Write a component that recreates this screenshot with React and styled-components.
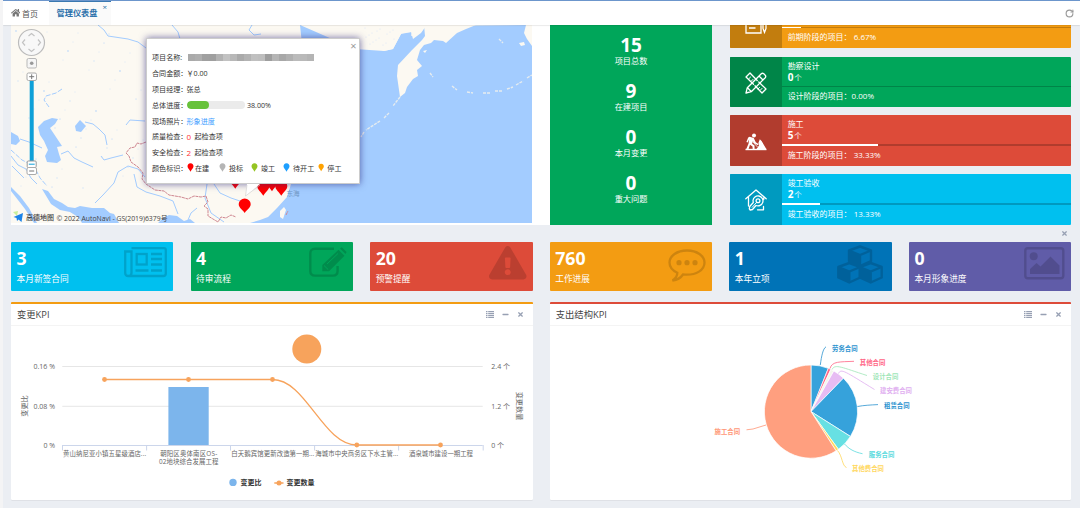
import React from "react";
import styled, { createGlobalStyle } from "styled-components";
import {
  FaExclamationTriangle,
  FaHome,
  FaMinus,
  FaTimes,
} from "react-icons/fa";
import { RotateCw } from "lucide-react";

const GlobalStyle = createGlobalStyle`
  * {
    box-sizing: border-box;
  }

  body {
    margin: 0;
    background: #ebeef3;
    font-family: "Open Sans", "Noto Sans CJK SC", sans-serif;
    color: #333;
    overflow: hidden;
  }

  svg {
    display: block;
  }
`;

const totals = [
  { value: 15, label: "项目总数" },
  { value: 9, label: "在建项目" },
  { value: 0, label: "本月变更" },
  { value: 0, label: "重大问题" },
];

const legend = [
  { color: "#ff0000", label: "在建", width: 32 },
  { color: "#b5b5b5", label: "投标", width: 32 },
  { color: "#95c423", label: "竣工", width: 32 },
  { color: "#1e9fff", label: "待开工", width: 35 },
  { color: "#ffa200", label: "停工", width: 24 },
];

const slices = [
  { from: 0, to: 21.8, color: "#36a2db" },
  { from: 21.8, to: 25.2, color: "#ff6384" },
  { from: 25.2, to: 29.3, color: "#f3f7ec" },
  { from: 29.3, to: 44.1, color: "#e7bcf3" },
  { from: 44.1, to: 122.2, color: "#36a2db" },
  { from: 122.2, to: 144, color: "#67e0e3" },
  { from: 144, to: 147.4, color: "#ffdb5c" },
  { from: 147.4, to: 360, color: "#ff9f7f" },
];

const pieLabels = [
  { x: 832, y: 350.7, text: "劳务合同", color: "#2c93cf", line: "M820.3 365 C821.5 356 823 348.5 826 346.8" },
  { x: 859.8, y: 364.8, text: "其他合同", color: "#ff6384", line: "M830 368.5 C832 361 840 362 854 361.3" },
  { x: 872.8, y: 378.8, text: "设计合同", color: "#9fe6b8", line: "M832 369.5 C835 363.5 842 367.5 867 375.5" },
  { x: 880, y: 392.8, text: "建安费合同", color: "#e0aef0", line: "M838.5 373.5 C841 368 845 371.5 874.5 389.5" },
  { x: 884, y: 408.4, text: "租赁合同", color: "#2c93cf", line: "M857.5 406.5 C864 405.3 870 405 878 404.6" },
  { x: 868.8, y: 456.8, text: "服务合同", color: "#5bdadd", line: "M844.5 444 C849 449 854 452 862.5 453.7" },
  { x: 852, y: 470.8, text: "其他费合同", color: "#ffd75c", line: "M837.5 450.5 C842.5 456 842 466 846.5 467.5" },
  { x: 714.6, y: 433.6, text: "施工合同", color: "#ff9676", line: "M766 425 L753 429 L746.5 429.8" },
];

const categories = [
  { x: 104.6, lines: ["黄山纳尼亚小镇五星级酒店..."], width: 83 },
  { x: 188.7, lines: ["朝阳区奥体南区OS-", "02地块综合发展工程"] },
  { x: 272.8, lines: ["白天鹅宾馆更新改造第一期..."], width: 83 },
  { x: 356.8, lines: ["海城市中央商务区下水主管..."], width: 83 },
  { x: 441, lines: ["酒泉城市建设一期工程"], width: 64 },
];

const CENTER = { x: 811, y: 411.6, r: 46.6 };

const slicePath = ({ from, to }) => {
  const point = (deg) => {
    const a = ((deg - 90) * Math.PI) / 180;
    return `${CENTER.x + CENTER.r * Math.cos(a)} ${CENTER.y + CENTER.r * Math.sin(a)}`;
  };
  return `M${CENTER.x} ${CENTER.y} L${point(from)} A${CENTER.r} ${CENTER.r} 0 ${
    to - from > 180 ? 1 : 0
  } 1 ${point(to)} Z`;
};

const Pin = ({ color }) => (
  <svg width="7" height="9" viewBox="0 0 14 18">
    <path d="M7 0.500 C11 0.500 13 3.500 13 6.500 C13 10.500 9.500 12.500 7 17.500 C4.500 12.500 1 10.500 1 6.500 C1 3.500 3 0.500 7 0.500 Z" fill={color} />
  </svg>
);

const MapDrawing = () => (
  <svg width="521" height="198" viewBox="11 25 521 198">
    <rect x="11" y="25" width="521" height="198" fill="#fcf9f2" />
    <g fill="#a3ccff">
      <path d="M300 25 L355 49 L384 51 L393 49 L401 34 L411 32 L413 39 L421 33 L426 26 L532 25 V223 H250 L260 220 L268 217 L277 208 L287 197 L291 184 L285 170 L310 120 Z" />
      <path d="M38 127 L44 121 L52 118 L58 119 L55 124 L50 128 L54 134 L60 143 L62 146 L57 147 L59 154 L61 160 L57 163 L47 162 L45 156 L48 150 L44 141 L40 135 Z" />
      <path d="M75 126 L80 120 L86 126 L81 132 L76 131 Z" />
      <path d="M11 132 L18 136 L20 141 L16 145 L11 144 Z" />
      <path d="M42 189 L48 191 L54 199 L62 203 L68 207 L75 208 L80 206 L92 208 L104 208 L110 213 L114 214 L119 223 H82 L78 217 L70 212 L60 210 L51 204 Z" />
      <path d="M158 223 L163 218 L169 215 L177 216 L184 221 L190 219 L195 223 Z" />
      <path d="M11 187 L20 196 L29 208 L37 223 L34 223 L25 209 L11 191 Z" />
    </g>
    <path
      d="M360 25 H426 L421 32 L411 36 L412 32 L401.500 33 L393 49 L384 51 L378 48 L360 48.500 Z"
      fill="#fcf9f2"
    />
    <path
      d="M424 25 L425 36 L422 40 L412 50 L398 65 L397 76 L400 97 L405 93 L407 87 L413 79 L418 76 L417 70 L422 66 L417 60 L420 50 L424 45 L431 43 L434 40 L443 41 L446 43 L457 33 L466 29 L476 25 Z"
      fill="#fcf9f2"
    />
    <path d="M526 25 L524 33 L527 39 L532 46 V25 Z M519 43 L524 42 L525 45 L521 46 Z M423 51 L427 50 L425 53 Z M280 211 L284 207 L286 210 L283 219 L280 217 Z" fill="#fcf9f2" />
    <path
      d="M400 97 L393 106 M389 113 L384 118 M380 121 L366 130 M364 132 L361 137 M430 73 L433 77 M452 86 L457 90 M467 92 L473 93 M483 93 L490 93 M495 91 L502 91 M507 89 L513 87 M516 85 L523 81 M527 78 L532 75 M499 39 L503 43"
      stroke="#e6ecef"
      strokeWidth="1.4"
      strokeDasharray="3 1"
      fill="none"
    />
    <g fill="none" stroke="#a3ccff" strokeWidth="1">
      <path d="M98 25 L104 30 L108 36 L128 39 L138 42 L146 48" />
      <path d="M172 25 L178 32 L180 39 M252 25 L249 30 L254 35 L261 34" />
      <path d="M85 122 L93 124 L99 129 L105 135 L107 145 M126 125 L130 120 L145 121" />
      <path d="M61 154 L68 151 L74 158 L82 162 L93 167 M42 148 L29 142 L20 139" />
      <path d="M62 89 L56 93 L46 96 L44 100 L49 107 M11 150 L22 160 L34 166 L40 178 L47 186" strokeDasharray="5 1.5" />
      <path d="M11 156 L18 165 L26 169 L31 178 L37 184 M12 166 L24 178" />
      <path d="M95 203 L103 195 L114 183 L118 172 L128 166 L138 169 L145 177" />
      <path d="M134 174 L137 187 L146 192 L160 196 L173 201 L178 214" />
      <path d="M123 155 L111 158 L104 160 L101 156" />
      <path d="M207 184 L205 198 L211 213 L224 222 M214 184 L220 193 L231 198 L243 202" />
      <path d="M197 208 L191 213 L188 220" />
    </g>
    <g fill="#b9d6fb">
      {Array.from({ length: 54 }, (_, i) => (
        <ellipse
          key={i}
          cx={16 + ((i * 47) % 128)}
          cy={31 + ((i * 29) % 164)}
          rx={i % 4 ? 0.45 : 0.9}
          ry={i % 3 ? 0.4 : 0.7}
        />
      ))}
      {Array.from({ length: 16 }, (_, i) => (
        <circle key={i} cx={365 + ((i * 7) % 31)} cy={28 + ((i * 5) % 18)} r="0.4" />
      ))}
    </g>
    <path
      d="M146 142 L141 144 L137 143 L135 147 L130 148 L126 153 L129 156 L131 162 L138 167 L143 173 L142 179 L146 184 L155 190 L164 191 L169 195 L175 196 L181 197 L188 199 L194 196 L201 197 L206 196 L208 202 L204 206 L208 209 L208 216 L213 219 L218 222 L221 217 L226 218 L231 215 L236 217 M286 215 L288 211"
      fill="none"
      stroke="#cf8791"
      strokeWidth="1"
      strokeDasharray="3 .6"
    />
    <text x="286.500" y="195.500" fontSize="6.6" fill="#7198c5">东海</text>
    <g fill="#ff0000">
      {[
        [235.300, 175],
        [263.300, 182],
        [272, 177.500],
        [281.300, 182],
      ].map(([x, y]) => (
        <path key={x} d={`M${x} ${y - 2}a6 6 0 0 1 6 6c0 4-4 6-6 9.700-2-3.700-6-5.700-6-9.700a6 6 0 0 1 6-6z`} />
      ))}
      <path d="M244.700 198.500a6 5.600 0 0 1 6 5.600c0 4-4 5.400-6 9-2-3.600-6-5-6-9a6 5.600 0 0 1 6-5.600z" />
    </g>
    <path d="M13 212 L18 211 L17 216 Z" fill="#c9ef9a" />
    <path d="M13.500 217 L23 213 L21.500 222 L18.500 219.500 L17 221 L16.500 218 Z" fill="#1b83e8" />
    <text x="26" y="219.700" fontSize="7" fontWeight="500" fill="#444" textLength="28">高德地图</text>
    <text x="56.500" y="221" fontSize="6.8" fill="#444" textLength="111" lengthAdjust="spacingAndGlyphs">© 2022 AutoNavi - GS(2019)6379号</text>
  </svg>
);

const ZoomControl = () => (
  <svg width="30" height="150" viewBox="0 0 30 150">
    <circle cx="14.500" cy="14.500" r="13" fill="#f8f8f8" stroke="#bcbcbc" strokeWidth="1.200" />
    <path d="M11.500 8 L14.500 5.500 L17.500 8 M11.500 21 L14.500 23.500 L17.500 21 M8 11.500 L5.500 14.500 L8 17.500 M21 11.500 L23.500 14.500 L21 17.500" fill="none" stroke="#c3c3c3" strokeWidth="1.200" />
    <rect x="10" y="30.500" width="9.500" height="9.500" rx="1.500" fill="#f6f6f6" stroke="#b8b8b8" />
    <circle cx="14.700" cy="35.300" r="1.800" fill="#999" />
    <rect x="12.700" y="51" width="4" height="86" fill="#0fa0d8" />
    <rect x="10" y="45" width="9.500" height="7.500" rx="1.500" fill="#fff" stroke="#aaa" />
    <path d="M12.200 48.700 H17.200 M14.700 46.300 V51.100" stroke="#777" />
    <rect x="10.200" y="133" width="9" height="6.500" rx="1" fill="#fff" stroke="#999" />
    <path d="M11.800 136.200 H17.700" stroke="#0fa0d8" />
    <rect x="10" y="139.500" width="9.500" height="7" rx="1.500" fill="#fff" stroke="#aaa" />
    <path d="M12.200 143 H17.200" stroke="#777" />
  </svg>
);

const CardPencilIcon = () => (
  <svg width="22" height="22" viewBox="0 0 22 22" fill="none" stroke="#fff" strokeWidth="1.300">
    <path d="M16 8 V20 H1 V2 H16 M4 11 H7 M4 15 H10.500" />
    <path d="M18 2 H21 V15.500 L19.500 19.500 L18 15.500 Z" />
  </svg>
);

const DesignIcon = () => (
  <svg width="22" height="22" viewBox="0 0 22 22" fill="none" stroke="#fff" strokeWidth="1.300" strokeLinejoin="round" strokeLinecap="round">
    <path d="M8.500 12.200 L1 5 L5 1 L12.200 8.500 M13.800 10 L21 17 L17 21 L10 13.800" />
    <path d="M3.800 6.800 L5.600 5 M6.200 9.200 L8 7.400 M13 17 L14.500 15.400 M15.500 18 L17 16.400" strokeWidth="1" />
    <path d="M1 21 L2.300 15.700 L16.300 1.700 Q17.500 .7 18.800 1.800 L20.200 3.200 Q21.300 4.500 20.200 5.700 L6.300 19.700 Z M2.500 15.800 L6.200 19.500 M14 4 L18 8" />
  </svg>
);

const DiggingIcon = () => (
  <svg width="22" height="18" viewBox="0 0 22 18" fill="#fff">
    <circle cx="9" cy="2.400" r="2" />
    <path d="M4.700 3.700 L8.700 5 L10.800 9.200 L13.500 11 L13 12.200 L9.600 10.500 L7.900 8.200 L7.100 10.700 L9.500 12.600 L9.600 16 H7.700 L7.500 13.600 L5 11.800 L3.600 16 H1.300 L3.500 10.800 L4.200 6.200 L2.700 9.500 L1.400 9 L3.200 4.400 Z" />
    <path d="M14.800 6.300 L16.600 8 L21.300 16 H11.500 L14 12.500 L13.400 10 Z" />
    <path d="M8 9 L12.500 14" stroke="#fff" strokeWidth=".8" />
    <rect x=".5" y="15.800" width="21" height="1.400" />
  </svg>
);

const HouseKeyIcon = () => (
  <svg width="22" height="22" viewBox="0 0 22 22" fill="none" stroke="#fff" strokeWidth="1.300" strokeLinejoin="round" strokeLinecap="round">
    <path d="M.8 9.800 L11 1 L21.200 9.800 M3.500 8.500 V17 M18.700 9 V10.500 M12.500 20.800 H18.500 V17.500" />
    <path d="M8 11.500 A5 5 0 1 1 11 16.500 L7.500 20.500 L5.200 21 L4.300 19.800 L4.700 17.500 L8.300 13.500 Z" />
    <circle cx="13" cy="11.800" r="1.900" />
    <path d="M11.500 13.500 L7.200 18.300" strokeWidth="1" />
  </svg>
);

const NewspaperIcon = () => (
  <svg width="43" height="31" viewBox="0 0 43 31" fill="none" stroke="currentColor" strokeWidth="2.300">
    <path d="M7.500 1.200 H40 Q41.800 1.200 41.800 3 V26.500 Q41.800 29 39.300 29 H4.300 Q1.200 29 1.200 26 V4.500 H7.500 V26 Q7.500 29 4.300 29" />
    <rect x="12.700" y="7" width="10" height="10.500" />
    <path d="M27 7 H38 M27 12 H38 M27 17.500 H38 M11.500 23.500 H24.500 M27 23.500 H38" />
  </svg>
);

const EditIcon = () => (
  <svg width="38" height="31" viewBox="0 0 38 31" fill="none" stroke="currentColor" strokeWidth="2.400">
    <path d="M25 1.800 H6 Q1.300 1.800 1.300 6.500 V24 Q1.300 28.600 6 28.600 H24 Q28.600 28.600 28.600 24 V19" />
    <path d="M13.300 18 L29.500 2.800 L35.500 8.800 L20 24.300 H13.300 Z M31 1.500 L32.800 .2 L37.600 5 L36.500 7 Z" fill="currentColor" stroke="none" />
    <path d="M15 18.500 L19.200 22.600 M18 17 L29 6.500" stroke="#00a65a" strokeWidth="1" />
  </svg>
);

const CommentIcon = () => (
  <svg width="38" height="34" viewBox="0 0 38 34">
    <path d="M19 1.500 C9 1.500 1.500 7 1.500 13.500 C1.500 17.800 4.500 21.500 9.300 23.700 C9.300 27 7.500 29.500 4.500 31.500 C9 31 13 28.500 15 25.500 C29 26.800 36.500 20.500 36.500 13.500 C36.500 7 29 1.500 19 1.500 Z" fill="none" stroke="currentColor" strokeWidth="2.300" />
    <circle cx="11" cy="13.700" r="2.600" fill="currentColor" />
    <circle cx="19" cy="13.700" r="2.600" fill="currentColor" />
    <circle cx="27" cy="13.700" r="2.600" fill="currentColor" />
  </svg>
);

const Cube = ({ x, y }) => (
  <g transform={`translate(${x} ${y})`}>
    <path d="M0 5 L11 1 L22 5 V15.500 L11 20.500 L0 15.500 Z" fill="none" stroke="currentColor" strokeWidth="2.400" strokeLinejoin="round" />
    <path d="M0 5 L11 9.500 V20.500 L0 15.500 Z" fill="currentColor" />
    <path d="M0 5 L11 9.500 L22 5 M11 9.500 V20.500" fill="none" stroke="currentColor" strokeWidth="2.400" />
  </g>
);

const CubesIcon = () => (
  <svg width="46" height="40" viewBox="0 0 46 40">
    <Cube x={12} y={0.5} />
    <Cube x={1.3} y={17} />
    <Cube x={22.7} y={17} />
  </svg>
);

const PictureIcon = () => (
  <svg width="41" height="33" viewBox="0 0 41 33">
    <rect x="1.300" y="1.300" width="38" height="30" rx="2.500" fill="none" stroke="currentColor" strokeWidth="2.400" />
    <circle cx="9.700" cy="9.300" r="4" fill="currentColor" />
    <path d="M6 27 V22 L12.500 16 L16.500 19.500 L26.500 9.500 L35.500 18.500 V27 Z" fill="currentColor" />
  </svg>
);

const ListIcon = () => (
  <svg width="8" height="7" viewBox="0 0 8 7" fill="currentColor">
    {[0, 1.9, 3.8, 5.7].map((y) => (
      <path key={y} d={`M0 ${y}h1.500v1.200H0z M2.200 ${y}H8v1.200H2.200z`} />
    ))}
  </svg>
);

// the first stage is scrolled half way under the header, only its lower part shows
const stages = [
  { color: "#f39c12", dark: "#c27d0e", icon: <CardPencilIcon />, text: "前期阶段的项目： 6.67%", percent: 6.67 },
  { color: "#00a65a", dark: "#008548", icon: <DesignIcon />, title: "勘察设计", count: 0, text: "设计阶段的项目：0.00%", percent: 0 },
  { color: "#dd4b39", dark: "#b13c2e", icon: <DiggingIcon />, title: "施工", count: 5, text: "施工阶段的项目： 33.33%", percent: 33.33 },
  { color: "#00c0ef", dark: "#009abf", icon: <HouseKeyIcon />, title: "竣工验收", count: 2, text: "竣工验收的项目： 13.33%", percent: 13.33 },
];

const cards = [
  { color: "#00c0ef", value: 3, label: "本月新签合同", icon: <NewspaperIcon />, top: 5, right: 6 },
  { color: "#00a65a", value: 4, label: "待审流程", icon: <EditIcon />, top: 5, right: 5.5 },
  { color: "#dd4b39", value: 20, label: "预警提醒", icon: <FaExclamationTriangle size={37.5} />, top: 1.5, right: 6 },
  { color: "#f39c12", value: 760, label: "工作进展", icon: <CommentIcon />, top: 7, right: 6 },
  { color: "#0073b7", value: 1, label: "本年立项", icon: <CubesIcon />, top: 2.5, right: 8.5 },
  { color: "#605ca8", value: 0, label: "本月形象进度", icon: <PictureIcon />, top: 5, right: 6 },
];

const KpiChart = () => (
  <svg width="521" height="174" viewBox="11 326 521 174" fontSize="7" fill="#666">
    <path d="M62.300 366.500 H482.700 M62.300 406.300 H482.700" stroke="#e6e6e6" />
    <path d="M62.300 445.500 H482.700 M62.500 445 V450.500 M146.600 445 V450.500 M230.500 445 V450.500 M314.600 445 V450.500 M398.600 445 V450.500 M483.200 445 V450.500" stroke="#ccd6eb" fill="none" />
    <rect x="168.400" y="387" width="40.300" height="58" fill="#7cb5ec" />
    <path d="M104.500 379.500 H272.500 C306 379.500 323 445 356.800 445 H440.500" fill="none" stroke="#f7a35c" strokeWidth="1.300" />
    {[[104.5, 379.5], [188.5, 379.5], [272.5, 379.5], [356.8, 445], [440.5, 445]].map(([x, y]) => (
      <circle key={x} cx={x} cy={y} r="2.400" fill="#f7a35c" />
    ))}
    <circle cx="306.800" cy="348.900" r="14.500" fill="#f7a35c" />
    <g textAnchor="end">
      <text x="55" y="369" textLength="21.500">0.16 %</text>
      <text x="55" y="408.700" textLength="21.500">0.08 %</text>
      <text x="55" y="447.600">0 %</text>
    </g>
    <text x="491.300" y="369">2.4 个</text>
    <text x="491.300" y="408.700">1.2 个</text>
    <text x="491.300" y="447.600">0 个</text>
    <text transform="translate(26.700 406) rotate(-90)" textAnchor="middle" fontSize="7.200">变更比</text>
    <text transform="translate(517 406) rotate(90)" textAnchor="middle" fontSize="7.200">变更数量</text>
    {categories.map((category) => (
      <g key={category.x} textAnchor="middle" fontSize="6.400">
        {category.lines.map((line, i) => (
          <text key={line} x={category.x} y={456.2 + i * 8.2} textLength={category.width || (i ? 59.5 : 57)}>
            {line}
          </text>
        ))}
      </g>
    ))}
    <g fill="#333" fontWeight="700">
      <circle cx="233" cy="482.400" r="3.700" fill="#7cb5ec" />
      <text x="240.600" y="485.200" textLength="21">变更比</text>
      <path d="M274.300 483 H283.500" stroke="#f7a35c" strokeWidth="1.300" />
      <circle cx="279" cy="483" r="2.500" fill="#f7a35c" />
      <text x="286.500" y="485.200" textLength="28">变更数量</text>
    </g>
  </svg>
);

const PieChart = () => (
  <svg width="521" height="174" viewBox="550 326 521 174" fontSize="6.400" fontWeight="700">
    {slices.map((slice) => (
      <path key={slice.from} d={slicePath(slice)} fill={slice.color} stroke="#fff" strokeWidth=".7" />
    ))}
    {pieLabels.map((label) => (
      <g key={label.text}>
        <path d={label.line} fill="none" stroke={label.color} strokeWidth=".8" />
        <text x={label.x} y={label.y} fill={label.color}>
          {label.text}
        </text>
      </g>
    ))}
  </svg>
);

const Panel = ({ color, title, children }) => (
  <PanelContainer $color={color}>
    <PanelHeader>
      <PanelTitle>{title}</PanelTitle>
      <PanelTools>
        <ListIcon />
        <FaMinus size={7} />
        <FaTimes size={7} />
      </PanelTools>
    </PanelHeader>
    {children}
  </PanelContainer>
);

const ProjectPopup = () => (
  <Popup>
    <PopupClose>×</PopupClose>
    <PopupRow>
      <PopupLabel>项目名称:</PopupLabel>
      <Mosaic>
        {["#aaa", "#aeaeae", "#a0a0a0", "#9f9f9f", "#b2b2b2", "#c2c2c2", "#b8b8b8", "#aaa", "#b3b3b3", "#c0c0c0", "#bebebe", "#9e9e9e", "#b5b5b5", "#a8a8a8", "#b0b0b0", "#bbb", "#b9b9b9", "#b4b4b4"].map((color, i) => (
          <MosaicCell key={i} $color={color} />
        ))}
      </Mosaic>
    </PopupRow>
    <PopupRow>
      <PopupLabel>合同金额：</PopupLabel>￥0.00
    </PopupRow>
    <PopupRow>
      <PopupLabel>项目经理：</PopupLabel>张总
    </PopupRow>
    <PopupRow>
      <PopupLabel>总体进度：</PopupLabel>
      <Track>
        <TrackFill />
      </Track>
      38.00%
    </PopupRow>
    <PopupRow>
      <PopupLabel>现场照片：</PopupLabel>
      <PopupLink>形象进度</PopupLink>
    </PopupRow>
    <PopupRow>
      <PopupLabel>质量检查：</PopupLabel>
      <Count>0</Count>起检查项
    </PopupRow>
    <PopupRow>
      <PopupLabel>安全检查：</PopupLabel>
      <Count>2</Count>起检查项
    </PopupRow>
    <PopupRow>
      <PopupLabel>颜色标识：</PopupLabel>
      {legend.map((item, i) => (
        <LegendItem key={item.label} $width={item.width} $gap={i ? 3.5 : 1.5}>
          <Pin color={item.color} />
          {item.label}
        </LegendItem>
      ))}
    </PopupRow>
    <PopupArrow width="16" height="13" viewBox="0 0 16 13">
      <path d="M2 0 L0.500 12 L15 0 Z" fill="#fff" />
      <path d="M2 1 L0.500 12 L15 1" fill="none" stroke="#ccc" strokeWidth=".6" />
    </PopupArrow>
  </Popup>
);

export default function App() {
  return (
    <Page>
      <GlobalStyle />
      <Header>
        <HomeTab>
          <FaHome size={9.5} />
          首页
        </HomeTab>
        <ActiveTab>
          管理仪表盘
          <TabClose>×</TabClose>
        </ActiveTab>
        <Refresh>
          <RotateCw size={9} strokeWidth={3} />
        </Refresh>
      </Header>
      <Content>
        <TopRow>
          <MapPanel>
            <MapArea>
              <MapDrawing />
              <ControlHolder>
                <ZoomControl />
              </ControlHolder>
              <ProjectPopup />
            </MapArea>
            <Totals>
              {totals.map((total) => (
                <Total key={total.label}>
                  <TotalValue>{total.value}</TotalValue>
                  <TotalLabel>{total.label}</TotalLabel>
                </Total>
              ))}
            </Totals>
          </MapPanel>
          <Stages>
            {stages.map((stage) => (
              <Stage key={stage.text} $color={stage.color}>
                <StageIcon $color={stage.dark}>{stage.icon}</StageIcon>
                <StageBody>
                  <StageTitle>{stage.title}</StageTitle>
                  <StageCount>
                    {stage.title && (
                      <>
                        <b>{stage.count}</b> 个
                      </>
                    )}
                  </StageCount>
                  <StageBar>
                    <StageBarFill style={{ width: `${stage.percent}%` }} />
                  </StageBar>
                  <StageText>{stage.text}</StageText>
                </StageBody>
              </Stage>
            ))}
          </Stages>
        </TopRow>
        <CloseRow>
          <FaTimes size={7} />
        </CloseRow>
        <Cards>
          {cards.map((card) => (
            <Card key={card.label} $color={card.color}>
              <div>
                <CardValue>{card.value}</CardValue>
                <CardLabel>{card.label}</CardLabel>
              </div>
              <CardIcon $top={card.top} $right={card.right}>
                {card.icon}
              </CardIcon>
            </Card>
          ))}
        </Cards>
        <Panels>
          <Panel color="#f39c12" title="变更KPI">
            <KpiChart />
          </Panel>
          <Panel color="#dd4b39" title="支出结构KPI">
            <PieChart />
          </Panel>
        </Panels>
      </Content>
    </Page>
  );
}

const Page = styled.div`
  display: flex;
  flex-direction: column;
  height: 508px;
  overflow: hidden;
  border-left: 3px solid #f4f4f5;
`;

const Header = styled.header`
  display: flex;
  flex: none;
  height: 25px;
  background: #fff;
  border-top: 1px solid #6c96cc;
  box-shadow: 0 0.5px 1.5px rgba(0, 0, 0, 0.2);
  position: relative;
  z-index: 1;
`;

const HomeTab = styled.div`
  display: flex;
  align-items: center;
  gap: 2px;
  width: 45.5px;
  padding-left: 7.5px;
  font-size: 8px;
  color: #555;

  svg {
    color: #777;
  }
`;

const ActiveTab = styled.div`
  position: relative;
  width: 62px;
  padding-left: 8px;
  line-height: 22px;
  border-top: 1.5px solid #3a78b0;
  background: #fafafa;
  font-size: 8.2px;
  font-weight: 600;
  color: #2a70aa;
`;

const TabClose = styled.span`
  position: absolute;
  top: -1px;
  right: 3.5px;
  font-size: 8px;
  font-weight: 400;
  line-height: 11px;
`;

const Refresh = styled.div`
  display: flex;
  align-items: center;
  margin-left: auto;
  padding-right: 6px;
  color: #999;
`;

const Content = styled.main`
  flex: 1;
  padding: 0 8.7px 0 8px;
`;

const TopRow = styled.div`
  display: flex;
  justify-content: space-between;
  height: 199.5px;
  overflow: hidden;
`;

const MapPanel = styled.section`
  display: flex;
  justify-content: space-between;
  width: 701.3px;
  background: #fff;
`;

const MapArea = styled.div`
  position: relative;
  width: 521px;
  height: 198px;
`;

const ControlHolder = styled.div`
  position: absolute;
  top: 3px;
  left: 6px;
`;

const Popup = styled.div`
  position: absolute;
  top: 13px;
  left: 134.5px;
  width: 214.5px;
  height: 146px;
  padding: 10.5px 6px 0 5.5px;
  background: #fff;
  border: 0.5px solid #ccc;
  box-shadow: 0 0 7px rgba(40, 35, 120, 0.65);
  font-size: 7.1px;
`;

const PopupClose = styled.span`
  position: absolute;
  top: 1px;
  right: 2.5px;
  font-size: 11px;
  line-height: 11px;
  color: #999;
`;

const PopupRow = styled.div`
  display: flex;
  align-items: center;
  height: 15.8px;
  white-space: nowrap;
`;

const PopupLabel = styled.span`
  width: 34.5px;
`;

const Mosaic = styled.div`
  display: flex;
  width: 126px;
  height: 7px;
  margin-left: 1px;
`;

const MosaicCell = styled.span`
  flex: 1;
  background: ${({ $color }) => $color};
`;

const Track = styled.div`
  width: 58px;
  height: 8.5px;
  margin-right: 2.5px;
  overflow: hidden;
  border-radius: 5px;
  background: #ebebeb;
`;

const TrackFill = styled.div`
  width: 38%;
  height: 100%;
  border-radius: 5px;
  background: #67c23a;
`;

const PopupLink = styled.span`
  color: #409eff;
`;

const Count = styled.span`
  width: 8px;
  font-size: 8px;
  color: #f33;
`;

const LegendItem = styled.span`
  display: flex;
  align-items: center;
  gap: ${({ $gap }) => $gap}px;
  width: ${({ $width }) => $width}px;
`;

const PopupArrow = styled.svg`
  position: absolute;
  top: 144.5px;
  left: 98px;
`;

const Totals = styled.div`
  display: flex;
  flex-direction: column;
  width: 162.5px;
  padding-top: 9.5px;
  background: #00a65a;
  color: #fff;
  text-align: center;
`;

const Total = styled.div`
  height: 46px;
`;

const TotalValue = styled.div`
  font-size: 19px;
  font-weight: 700;
  line-height: 20px;
`;

const TotalLabel = styled.div`
  font-size: 8.2px;
  line-height: 12px;
`;

const Stages = styled.div`
  display: flex;
  flex-direction: column;
  justify-content: flex-end;
  gap: 8.7px;
  width: 341.7px;
`;

const Stage = styled.div`
  display: flex;
  flex: none;
  height: 50.2px;
  overflow: hidden;
  border-radius: 1px;
  background: ${({ $color }) => $color};
  color: #fff;
`;

const StageIcon = styled.div`
  display: flex;
  align-items: center;
  justify-content: center;
  width: 52px;
  padding-top: 2px;
  background: ${({ $color }) => $color};
`;

const StageBody = styled.div`
  flex: 1;
  padding-top: 3px;
  font-size: 8px;
`;

const StageTitle = styled.div`
  height: 12px;
  padding-left: 6px;
  line-height: 12px;
`;

const StageCount = styled.div`
  height: 10px;
  padding-left: 6px;
  font-size: 7.5px;
  line-height: 10px;

  b {
    font-size: 10px;
    margin-right: -1px;
  }
`;

const StageBar = styled.div`
  height: 1.5px;
  margin-top: 4px;
  background: rgba(0, 0, 0, 0.2);
`;

const StageBarFill = styled.div`
  height: 100%;
  background: #fff;
`;

const StageText = styled.div`
  padding-left: 6px;
  line-height: 18px;
`;

const CloseRow = styled.div`
  display: flex;
  align-items: center;
  justify-content: flex-end;
  height: 17.8px;
  padding-right: 3px;
  color: #97a0b3;
`;

const Cards = styled.div`
  display: grid;
  grid-template-columns: repeat(6, 1fr);
  gap: 17.2px;
`;

const Card = styled.div`
  display: flex;
  justify-content: space-between;
  height: 48.3px;
  padding: 5px 0 0 5.5px;
  border-radius: 1px;
  background: ${({ $color }) => $color};
  color: #fff;
`;

const CardValue = styled.div`
  font-size: 17.7px;
  font-weight: 700;
  line-height: 22px;
`;

const CardLabel = styled.div`
  font-size: 8.7px;
  line-height: 20px;
`;

const CardIcon = styled.div`
  margin-top: ${({ $top }) => $top - 5}px;
  margin-right: ${({ $right }) => $right}px;
  color: #000;
  opacity: 0.15;
`;

const Panels = styled.div`
  display: grid;
  grid-template-columns: 1fr 1fr;
  gap: 17.2px;
  margin-top: 11px;
`;

const PanelContainer = styled.section`
  height: 198.5px;
  overflow: hidden;
  border-top: 2px solid ${({ $color }) => $color};
  border-radius: 1px;
  background: #fff;
  box-shadow: 0 0.5px 0.5px rgba(0, 0, 0, 0.1);
`;

const PanelHeader = styled.div`
  display: flex;
  align-items: center;
  justify-content: space-between;
  height: 22.3px;
  padding: 0 9px 0 6px;
  border-bottom: 1px solid #f4f4f4;
`;

const PanelTitle = styled.h3`
  margin: 0;
  font-size: 9.3px;
  font-weight: 400;
  color: #444;
`;

const PanelTools = styled.div`
  display: flex;
  align-items: center;
  gap: 8px;
  color: #97a0b3;
`;
